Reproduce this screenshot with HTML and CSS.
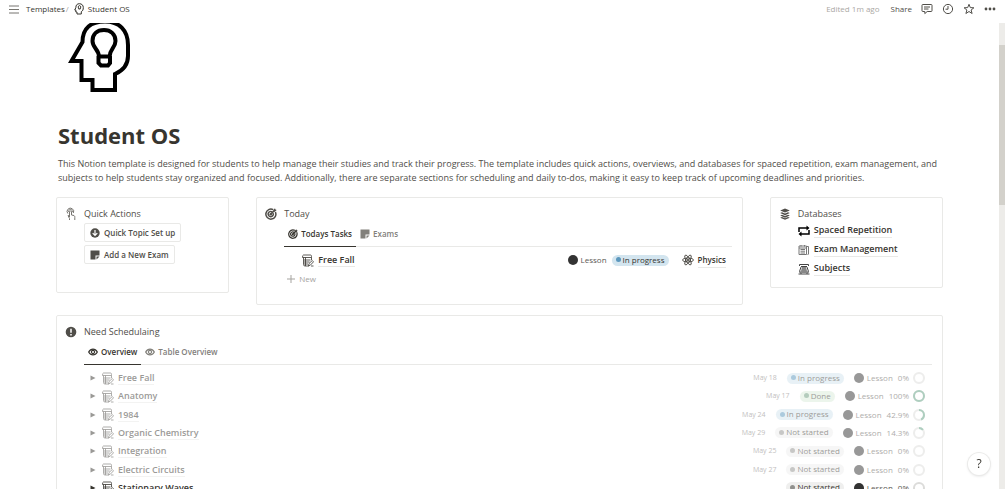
FILE: index.html
```html
<!DOCTYPE html>
<html lang="en">

<head>
    <meta charset="UTF-8">
    <meta name="viewport" content="width=device-width, initial-scale=1.0">
    <title>Student OS</title>
    <link rel="stylesheet" href="styles.css">
</head>

<body>
    <!-- Shared icons -->
    <svg class="sprite" aria-hidden="true">
        <symbol id="note" viewBox="0 0 12 13">
            <path d="M1.500 1H8.500Q9.500 1 9.500 2.500V6M1.500 1Q.5 1 .5 3.500H9M1.500 3.500V10.500Q1.500 12 3 12H7M3.500 3.500V12M2 6H8.500M2 8H7.500M2 10H6M6.500 11.800L7 9.500L10.300 6.500L11.500 7.800L8.300 11.200ZM9 12H11.500" fill="none" stroke="currentColor" stroke-opacity=".8" />
        </symbol>
        <symbol id="target" viewBox="0 0 12 12">
            <path d="M8.200 1.700A5 5 0 1 0 10.400 4M7.200 3.900A2.600 2.600 0 1 0 8.200 5.200M5.700 6.300L9 3" fill="none" stroke="currentColor" stroke-width="1.500" />
            <circle cx="5.700" cy="6.300" r="1.200" fill="currentColor" />
            <path d="M8 4L8.300 2.100L10 .3L10.400 1.600L11.700 2L9.900 3.800Z" fill="currentColor" />
        </symbol>
        <symbol id="sticky" viewBox="0 0 10 10">
            <path d="M.5.5H9.500V5.500H5.500V9.500H.5Z" fill="currentColor" />
            <path d="M6.500 6.500H9.500L6.500 9.500Z" fill="currentColor" />
        </symbol>
        <symbol id="eye" viewBox="0 0 12 10">
            <path d="M.8 5C3.500.4 8.500.4 11.200 5C8.500 9.600 3.500 9.600.8 5Z" fill="none" stroke="currentColor" stroke-width="1.500" />
            <circle cx="6" cy="5" r="1.900" fill="none" stroke="currentColor" stroke-width="1.400" />
        </symbol>
    </svg>

    <header class="topbar">
        <button class="icon-btn menu" aria-label="Menu">
            <svg width="10" height="9" viewBox="0 0 10 9"><path d="M0 1H10M0 4.500H10M0 8H10" stroke="#777570" /></svg>
        </button>
        <nav class="breadcrumb">
            <a href="#">Templates</a>
            <span class="slash">/</span>
            <a href="#" class="current">
                <svg width="10" height="12" viewBox="0 0 10 12"><path d="M3 11V9H1.800V7H.7L1.800 4.800C1.800 2 3.200.7 5.400.7C7.800.7 9.300 2.300 9.300 4.500C9.300 6.800 8.700 7.900 7.300 8.700V11Z" fill="none" stroke="currentColor" /><path d="M4.700 6V5A1.300 1.300 0 1 1 6.300 5V6Z" fill="none" stroke="currentColor" /></svg>
                Student OS
            </a>
        </nav>
        <div class="actions">
            <span class="edited">Edited 1m ago</span>
            <button class="share">Share</button>
            <button class="icon-btn" aria-label="Comments">
                <svg width="12" height="12" viewBox="0 0 12 12"><path d="M1.800 1.500H10.200Q11 1.500 11 2.300V7.700Q11 8.500 10.200 8.500H6.200L3.800 10.600V8.500H1.800Q1 8.500 1 7.700V2.300Q1 1.500 1.800 1.500ZM3 4H9M3 6H7.500" fill="none" stroke="currentColor" /></svg>
            </button>
            <button class="icon-btn" aria-label="Updates">
                <svg width="12" height="12" viewBox="0 0 12 12"><circle cx="6" cy="6" r="4.600" fill="none" stroke="currentColor" /><path d="M6 3V6.200H3.500" fill="none" stroke="currentColor" /></svg>
            </button>
            <button class="icon-btn" aria-label="Favorite">
                <svg width="12" height="12" viewBox="0 0 12 12"><path d="M6 1.300L7.300 4.600L10.900 4.800L8.100 7L9.100 10.500L6 8.500L2.900 10.500L3.900 7L1.100 4.800L4.700 4.600Z" fill="none" stroke="currentColor" /></svg>
            </button>
            <button class="icon-btn" aria-label="More">
                <svg width="12" height="12" viewBox="0 0 12 12"><g fill="currentColor"><circle cx="2" cy="6" r="1.400" /><circle cx="6" cy="6" r="1.400" /><circle cx="10" cy="6" r="1.400" /></g></svg>
            </button>
        </div>
    </header>

    <main class="page">
        <div class="content">
            <svg class="page-icon" width="66" height="76" viewBox="0 0 66 76">
                <g fill="none" stroke="#000" stroke-width="4">
                    <path d="M25.500 74V64H14.500V45H4.500L15.500 26C15.500 12 24 5.500 38 5.500C52 5.500 61 14 61 29V40C61 48 56 54.500 48 58V74Z" />
                    <path d="M32 41C32 33 25.500 32 25.500 25C25.500 18 30 14 37 14C43.500 14 48.500 18 48.500 25C48.500 32 42.500 33 42.500 41M30 40.500H44.500M31.500 40V47L34 49.500H41L43 47V40" />
                </g>
            </svg>
            <h1>Student OS</h1>
            <p class="intro">This Notion template is designed for students to help manage their studies and track their progress. The template includes quick actions, overviews, and databases for spaced repetition, exam management, and subjects to help students stay organized and focused. Additionally, there are separate sections for scheduling and daily to-dos, making it easy to keep track of upcoming deadlines and priorities.</p>

            <div class="cards">
                <section class="card quick">
                    <h2>
                        <svg width="12" height="14" viewBox="0 0 12 14"><path d="M4.500 10V4.500Q5.500 3.500 6.500 4.500V8L9 8.500Q10 9 9.800 10.500V13M4.500 9L3 8.500L4.500 11.500V13M2.800 6.500A3.300 3.300 0 1 1 8.300 6M3.700 5A1.900 1.900 0 1 1 7.300 5" fill="none" stroke="#777570" /></svg>
                        Quick Actions
                    </h2>
                    <button class="action">
                        <svg width="10" height="10" viewBox="0 0 10 10"><circle cx="5" cy="5" r="4.700" fill="currentColor" /><path d="M5 2V7.500M2.700 5.200L5 7.500L7.300 5.200" fill="none" stroke="#fff" stroke-width="1.200" /></svg>
                        Quick Topic Set up
                    </button>
                    <button class="action">
                        <svg width="10" height="10"><use href="#sticky" /></svg>
                        Add a New Exam
                    </button>
                </section>

                <section class="card today">
                    <h2>
                        <svg width="12" height="12"><use href="#target" /></svg>
                        Today
                    </h2>
                    <div class="tabs">
                        <button class="tab active"><svg width="10" height="10"><use href="#target" /></svg>Todays Tasks</button>
                        <button class="tab"><svg width="10" height="10"><use href="#sticky" /></svg>Exams</button>
                    </div>
                    <div class="task">
                        <svg width="12" height="13"><use href="#note" /></svg>
                        <a href="#" class="name">Free Fall</a>
                        <span class="lesson"><i></i>Lesson</span>
                        <span class="pill progress">In progress</span>
                        <a href="#" class="subject">
                            <svg width="12" height="12" viewBox="0 0 12 12"><g fill="none" stroke="currentColor" stroke-width=".8"><ellipse cx="6" cy="6" rx="5.500" ry="2" /><ellipse cx="6" cy="6" rx="5.500" ry="2" transform="rotate(60 6 6)" /><ellipse cx="6" cy="6" rx="5.500" ry="2" transform="rotate(120 6 6)" /></g><circle cx="6" cy="6" r="1" fill="currentColor" /></svg>
                            <span>Physics</span>
                        </a>
                    </div>
                    <button class="new"><svg width="8" height="8" viewBox="0 0 8 8"><path d="M4 0V8M0 4H8" stroke="currentColor" /></svg>New</button>
                </section>

                <section class="card databases">
                    <h2>
                        <svg width="12" height="12" viewBox="0 0 12 12"><path d="M6 .5L10.800 2.500L6 4.600L1.200 2.500ZM1.200 5L3 4.300L6 5.600L9 4.300L10.800 5L6 7.200ZM1.200 7.500L3 6.800L6 8.100L9 6.800L10.800 7.500L6 9.700ZM1.200 9.700L3 9L6 10.300L9 9L10.800 9.700L6 11.800Z" fill="currentColor" /></svg>
                        Databases
                    </h2>
                    <a href="#" class="db">
                        <svg width="12" height="12" viewBox="0 0 12 12"><path d="M1 7V3H9.500M11 5V9H2.500" fill="none" stroke="#000" stroke-width="1.500" /><path d="M8.500.5L11.500 3L8.500 5.500ZM3.500 6.500L.5 9L3.500 11.500Z" /></svg>
                        <span>Spaced Repetition</span>
                    </a>
                    <a href="#" class="db">
                        <svg width="12" height="12" viewBox="0 0 12 12"><path d="M1 2H8.500V10.500H1ZM8.500 2.500H10.500V10L9.500 11M1 4H8.500M2.500 5.500H7M2.500 7.200H7M2.500 9H7M3 1V2.500M6.500 1V2.500" fill="none" stroke="#777" /></svg>
                        <span>Exam Management</span>
                    </a>
                    <a href="#" class="db">
                        <svg width="12" height="12" viewBox="0 0 12 12"><path d="M1.500 3V1.500H10.500V3M3 3.500H9M3 4L1.500 8.500M9 4L10.500 8.500M.5 11H11.500M1 9H3V11M11 9H9V11" fill="none" stroke="#444" /><path d="M4 4H8L9.500 10H2.500Z" fill="#888" /></svg>
                        <span>Subjects</span>
                    </a>
                </section>
            </div>

            <section class="card schedule">
                <h2>
                    <svg width="12" height="12" viewBox="0 0 12 12"><circle cx="6" cy="6" r="5.300" fill="currentColor" /><path d="M6 2.700V6.800M6 8V9.500" stroke="#fff" stroke-width="1.500" /></svg>
                    Need Schedulaing
                </h2>
                <div class="tabs">
                    <button class="tab active"><svg width="10" height="10"><use href="#eye" /></svg>Overview</button>
                    <button class="tab"><svg width="10" height="10"><use href="#eye" /></svg>Table Overview</button>
                </div>
                <ul class="rows" id="rows"></ul>
            </section>
        </div>
        <div class="scrollbar"><div class="thumb"></div></div>
    </main>

    <button class="help" aria-label="Help">?</button>

    <script>
        const topics = [
            { name: 'Free Fall', date: 'May 18', status: 'In progress', done: 0 },
            { name: 'Anatomy', date: 'May 17', status: 'Done', done: 100 },
            { name: '1984', date: 'May 24', status: 'In progress', done: 42.9 },
            { name: 'Organic Chemistry', date: 'May 29', status: 'Not started', done: 14.3 },
            { name: 'Integration', date: 'May 25', status: 'Not started', done: 0 },
            { name: 'Electric Circuits', date: 'May 27', status: 'Not started', done: 0 },
            { name: 'Stationary Waves', date: '', status: 'Not started', done: 0, open: true }
        ];
        const pills = { 'In progress': 'progress', 'Done': 'done', 'Not started': 'idle' };

        document.getElementById('rows').innerHTML = topics.map(t => `
            <li class="${t.open ? 'row' : 'row faded'}">
                <svg width="6" height="6" viewBox="0 0 6 6"><path d="M.5.5L5.500 3L.5 5.500Z" fill="currentColor" /></svg>
                <svg class="note" width="12" height="13"><use href="#note" /></svg>
                <a href="#" class="name">${t.name}</a>
                <span class="date">${t.date}</span>
                <span class="pill ${pills[t.status]}">${t.status}</span>
                <span class="lesson"><i></i>Lesson</span>
                <span class="percent">${t.done}%</span>
                <svg class="ring" width="12" height="12" viewBox="0 0 12 12">
                    <circle cx="6" cy="6" r="5" stroke="#dcdcda" />
                    <circle cx="6" cy="6" r="5" stroke="#5f9f80" pathLength="100" stroke-dasharray="${t.done} 101" transform="rotate(-90 6 6)" />
                </svg>
            </li>
        `).join('');
    </script>
</body>

</html>
```
FILE: styles.css
```css
* {
    box-sizing: border-box;
}

body {
    margin: 0;
    height: 100vh;
    display: flex;
    flex-direction: column;
    overflow: hidden;
    font-family: "Open Sans", "Noto Sans", sans-serif;
    font-size: 9px;
    line-height: 14px;
    color: #37352f;
    background: #fff;
}

a {
    color: inherit;
    text-decoration: none;
}

button {
    font: inherit;
    color: inherit;
    background: none;
    border: none;
    padding: 0;
    cursor: pointer;
}

svg {
    display: block;
    flex: none;
}

.sprite {
    position: absolute;
    width: 0;
    height: 0;
}

/* Top bar */
.topbar {
    flex: none;
    display: flex;
    align-items: center;
    height: 23px;
    padding: 0 9px 5px;
    font-size: 8px;
}

.menu {
    margin-right: 7px;
}

.breadcrumb,
.current,
.actions {
    display: flex;
    align-items: center;
}

.slash {
    margin: 0 5px 0 1px;
    color: #a5a39f;
}

.current {
    gap: 4px;
}

.actions {
    margin-left: auto;
    gap: 9px;
    color: #504e49;
}

.edited {
    margin-right: 2px;
    color: #aaa8a4;
}

/* Page */
.page {
    flex: 1;
    min-height: 0;
    position: relative;
    overflow: hidden;
}

.content {
    padding: 0 62px 0 56px;
}

.page-icon {
    margin: -7px 0 0 11px;
}

h1 {
    margin: 27px 0 0 2px;
    font-size: 22px;
    line-height: 32px;
    font-weight: 700;
}

.intro {
    margin: 6px 0 12px 2px;
    color: #504e49;
}

.cards {
    display: grid;
    grid-template-columns: 173fr 486fr 173fr;
    gap: 27px;
    align-items: start;
    margin-bottom: 10px;
}

.card {
    border: 1px solid #e9e9e7;
    border-radius: 2px;
    padding: 8px 10px 0 27px;
}

.card h2 {
    display: flex;
    align-items: center;
    gap: 7px;
    margin: 0 0 0 -19px;
    height: 15px;
    font-size: 9px;
    font-weight: 400;
    color: #504e49;
}

.quick {
    padding-bottom: 25px;
}

.action {
    display: flex;
    align-items: center;
    gap: 4px;
    height: 19px;
    margin: 2px 0 3px;
    padding: 0 5px;
    border: 1px solid #e9e9e7;
    border-radius: 2px;
    font-size: 8px;
    font-weight: 600;
    color: #504e49;
}

/* Tabs */
.tabs {
    display: flex;
    height: 26px;
    border-bottom: 1px solid #e9e9e7;
}

.tab {
    display: flex;
    align-items: center;
    gap: 3px;
    height: 26px;
    padding: 0 4px;
    border-bottom: 1px solid transparent;
    font-size: 8px;
    font-weight: 600;
    color: #82807b;
}

.tab.active {
    color: #37352f;
    border-bottom-color: #37352f;
}

.today {
    padding-bottom: 19px;
}

.task {
    display: flex;
    align-items: center;
    height: 26px;
    padding: 0 6px 0 18px;
    font-size: 8px;
}

.name {
    margin: 0 auto 0 4px;
    border-bottom: 1px solid #e9e9e7;
    font-size: 9px;
    line-height: 13px;
    font-weight: 600;
}

.lesson {
    display: flex;
    align-items: center;
    gap: 3px;
    color: #5b5954;
}

.lesson i {
    width: 10px;
    height: 10px;
    border-radius: 50%;
    background: #333;
}

.pill {
    display: flex;
    align-items: center;
    gap: 2px;
    height: 11px;
    padding: 0 4px 1px;
    border-radius: 6px;
    font-size: 8px;
    line-height: 10px;
}

.pill::before {
    content: "";
    width: 5px;
    height: 5px;
    border-radius: 50%;
}

.progress {
    background: #d3e5ef;
}

.progress::before {
    background: #5b97bd;
}

.done {
    background: #dbeddb;
}

.done::before {
    background: #6c9b7d;
}

.idle {
    background: #efefee;
}

.idle::before {
    background: #91918e;
}

.task .pill {
    margin: 0 13px 0 5px;
}

.subject {
    display: flex;
    align-items: center;
    gap: 4px;
    font-weight: 600;
}

.subject span,
.db span {
    border-bottom: 1px solid #e9e9e7;
}

.new {
    display: flex;
    align-items: center;
    gap: 4px;
    padding-left: 3px;
    font-size: 8px;
    line-height: 12px;
    color: #a5a39f;
}

/* Databases */
.databases {
    padding-bottom: 9px;
}

.db {
    display: flex;
    align-items: center;
    gap: 4px;
    height: 19px;
    font-weight: 600;
}

/* Schedule */
.schedule {
    min-height: 300px;
}

.rows {
    display: grid;
    grid-auto-rows: 1fr;
    height: 128px;
    margin: 4px 0 0;
    padding: 0;
    list-style: none;
}

.row {
    display: flex;
    align-items: center;
    padding: 0 7px 0 6px;
    font-size: 8px;
}

.faded {
    opacity: 0.5;
}

.note {
    margin-left: 6px;
}

.date {
    font-size: 7px;
    color: #82807b;
}

.row .pill {
    margin: 0 10px;
}

.percent {
    margin: 0 4px 0 5px;
    color: #5b5954;
}

.ring circle {
    fill: none;
    stroke-width: 2;
}

/* Floating parts */
.scrollbar {
    position: absolute;
    top: 0;
    right: 0;
    bottom: 0;
    width: 6px;
    padding-top: 22px;
    background: #edece9;
}

.thumb {
    height: 36%;
    background: #d3d1cb;
}

.help {
    position: fixed;
    right: 15px;
    bottom: 14px;
    width: 22px;
    height: 22px;
    border-radius: 50%;
    background: #fff;
    box-shadow: 0 0 0 1px #ebebea, 0 1px 3px rgba(0, 0, 0, 0.15);
    font-size: 12px;
}
```
